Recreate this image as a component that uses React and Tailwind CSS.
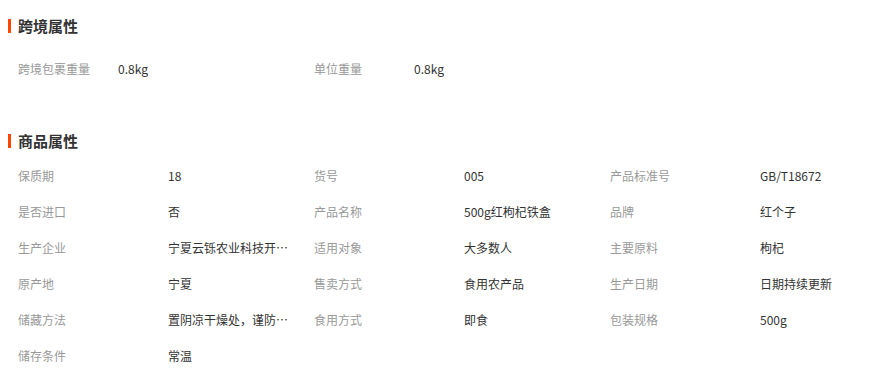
import React from 'react';

const crossBorder = [
  ['跨境包裹重量', '0.8kg'],
  ['单位重量', '0.8kg'],
];

const goods = [
  ['保质期', '18'],
  ['货号', '005'],
  ['产品标准号', 'GB/T18672'],
  ['是否进口', '否'],
  ['产品名称', '500g红枸杞铁盒'],
  ['品牌', '红个子'],
  ['生产企业', '宁夏云铄农业科技开发有限公司'],
  ['适用对象', '大多数人'],
  ['主要原料', '枸杞'],
  ['原产地', '宁夏'],
  ['售卖方式', '食用农产品'],
  ['生产日期', '日期持续更新'],
  ['储藏方法', '置阴凉干燥处，谨防受潮'],
  ['食用方式', '即食'],
  ['包装规格', '500g'],
  ['储存条件', '常温'],
];

const SectionTitle = ({ children }) => (
  <div className="flex items-center h-[20px]">
    <span className="w-[3px] h-[14px] bg-[#ff4400] ml-[8px]" />
    <h2 className="ml-[7px] text-[15px] font-bold text-[#333] leading-[20px]">{children}</h2>
  </div>
);

const App = () => {
  return (
    <div
      className="w-[886px] h-[374px] bg-white overflow-hidden pt-[16px]"
      style={{ fontFamily: '"Noto Sans CJK SC", "Liberation Sans", sans-serif' }}
    >
      <SectionTitle>跨境属性</SectionTitle>
      <div className="mt-[15px] pl-[18px] grid grid-cols-[100px_196px_100px_196px] text-[12px]">
        {crossBorder.map(([k, v]) => (
          <React.Fragment key={k}>
            <div className="h-[36px] leading-[36px] text-[#999]">{k}</div>
            <div className="h-[36px] leading-[36px] text-[#333]">{v}</div>
          </React.Fragment>
        ))}
      </div>

      <div className="mt-[44px]">
        <SectionTitle>商品属性</SectionTitle>
      </div>
      <div className="mt-[7px] pl-[18px] grid grid-cols-[150px_146px_150px_146px_150px_146px] text-[12px]">
        {goods.map(([k, v]) => (
          <React.Fragment key={k}>
            <div className="h-[36px] leading-[36px] text-[#999]">{k}</div>
            <div className="h-[36px] leading-[36px] text-[#333] pr-[12px] min-w-0">
              <div className="w-[122px] truncate">{v}</div>
            </div>
          </React.Fragment>
        ))}
      </div>
    </div>
  );
};

export default App;
